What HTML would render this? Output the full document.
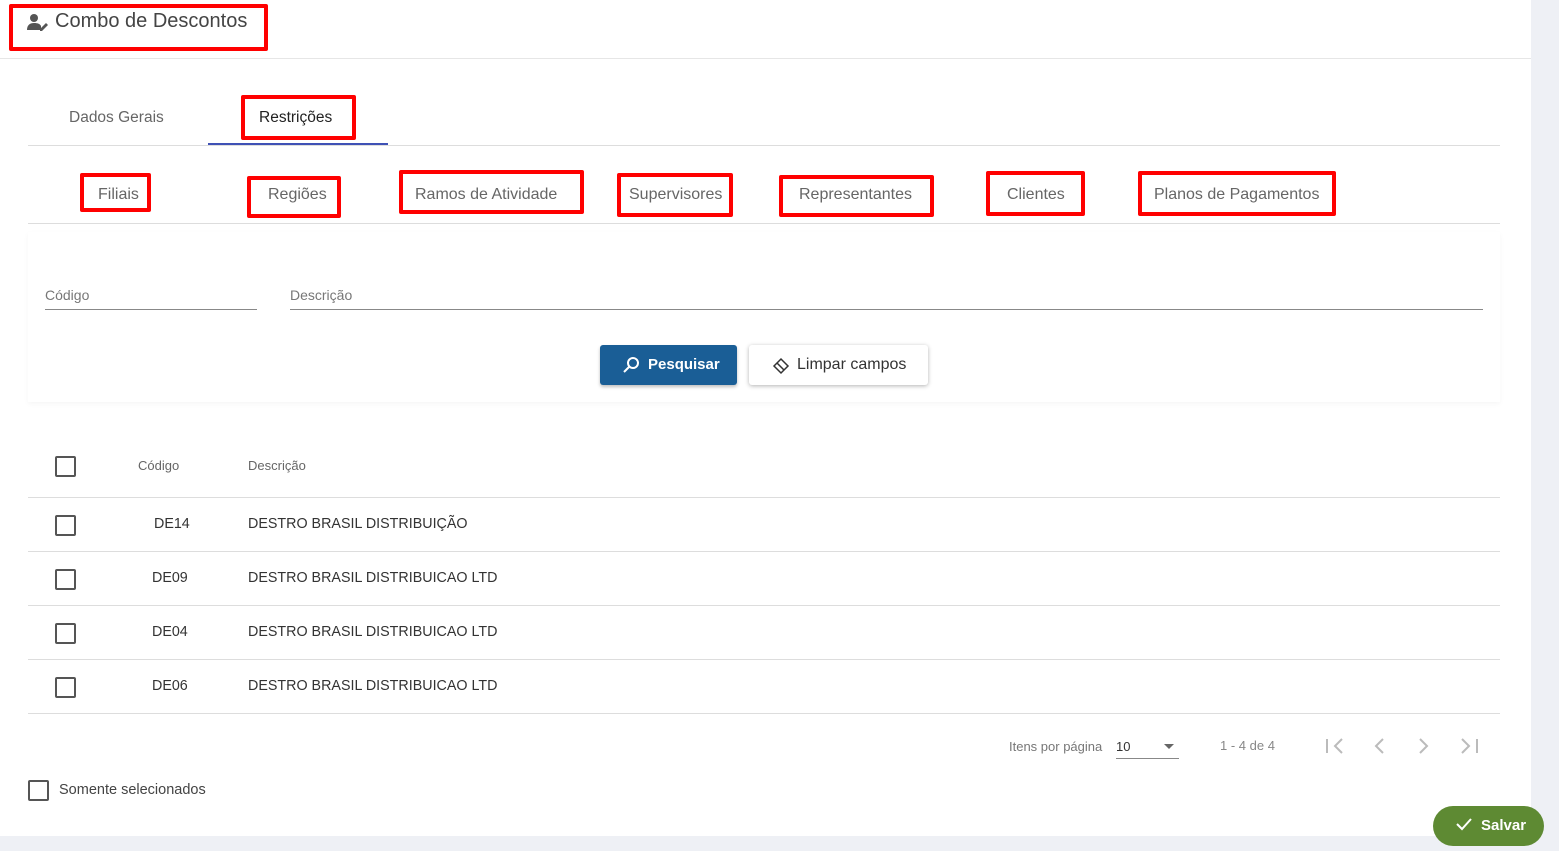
<!DOCTYPE html><html><head><meta charset="utf-8"><style>
*{box-sizing:border-box;margin:0;padding:0}
body{width:1559px;height:851px;background:#eef0f5;font-family:"Liberation Sans",sans-serif;position:relative;overflow:hidden;color:#333}
.a{position:absolute}
.red{position:absolute;border:4px solid #f00;border-radius:2px}
.t{position:absolute;font-size:15px;color:#666;white-space:nowrap}
.tab{font-size:16px;top:186px}
.r{font-size:14.3px;color:#333}
.cb{position:absolute;width:21px;height:21px;border:2px solid #555;border-radius:2px;left:55px}
.row{position:absolute;left:28px;width:1472px;height:1px;background:#ddd}
</style></head><body>
<div class="a" style="left:0;top:0;width:1531px;height:836px;background:#fff"></div>
<div class="a" style="left:0;top:58px;width:1531px;height:1px;background:#e6e6e6"></div>
<svg class="a" style="left:27px;top:13px" width="22" height="18" viewBox="0 0 22 18"><circle cx="7" cy="5" r="4" fill="#555"/><path d="M0 17c0-5 3-7 7-7s6 1 7 3v4z" fill="#555"/><path d="M13 16l6-6 2 2-6 6h-2z" fill="#555"/></svg>
<div class="t" style="left:55px;top:10px;font-size:20px;color:#444">Combo de Descontos</div>
<div class="red" style="left:9px;top:4px;width:259px;height:47px"></div>
<div class="t" style="left:69px;top:109px;color:#666;font-size:15.5px">Dados Gerais</div>
<div class="t" style="left:259px;top:109px;color:#222;font-size:15.5px">Restrições</div>
<div class="red" style="left:241px;top:95px;width:115px;height:45px"></div>
<div class="a" style="left:28px;top:145px;width:1472px;height:1px;background:#ddd"></div>
<div class="a" style="left:208px;top:143px;width:180px;height:2px;background:#3f51b5"></div>
<div class="t tab" style="left:98px">Filiais</div>
<div class="t tab" style="left:268px">Regiões</div>
<div class="t tab" style="left:415px">Ramos de Atividade</div>
<div class="t tab" style="left:629px">Supervisores</div>
<div class="t tab" style="left:799px">Representantes</div>
<div class="t tab" style="left:1007px">Clientes</div>
<div class="t tab" style="left:1154px">Planos de Pagamentos</div>
<div class="red" style="left:80px;top:173px;width:71px;height:39px"></div>
<div class="red" style="left:247px;top:176px;width:94px;height:42px"></div>
<div class="red" style="left:399px;top:170px;width:185px;height:44px"></div>
<div class="red" style="left:617px;top:173px;width:116px;height:44px"></div>
<div class="red" style="left:779px;top:175px;width:155px;height:42px"></div>
<div class="red" style="left:986px;top:171px;width:99px;height:45px"></div>
<div class="red" style="left:1138px;top:171px;width:198px;height:45px"></div>
<div class="a" style="left:28px;top:223px;width:1472px;height:1px;background:#ddd"></div>
<div class="a" style="left:28px;top:232px;width:1472px;height:170px;box-shadow:0 2px 5px rgba(0,0,0,.04)"></div>
<div class="t" style="left:45px;top:287px;font-size:14px;color:#777">Código</div>
<div class="a" style="left:45px;top:309px;width:212px;height:1px;background:#888"></div>
<div class="t" style="left:290px;top:287px;font-size:14px;color:#777">Descrição</div>
<div class="a" style="left:290px;top:309px;width:1193px;height:1px;background:#888"></div>
<div class="a" style="left:600px;top:345px;width:137px;height:40px;background:#1a5e96;border-radius:3px;box-shadow:0 2px 3px rgba(0,0,0,.25)"></div>
<svg class="a" style="left:623px;top:356px" width="18" height="18" viewBox="0 0 18 18"><circle cx="10" cy="7" r="5" fill="none" stroke="#fff" stroke-width="2"/><path d="M6 11l-5 5" stroke="#fff" stroke-width="2"/></svg>
<div class="t" style="left:648px;top:356px;color:#fff;font-weight:bold">Pesquisar</div>
<div class="a" style="left:749px;top:345px;width:179px;height:40px;background:#fff;border-radius:3px;box-shadow:0 1px 4px rgba(0,0,0,.3)"></div>
<svg class="a" style="left:772px;top:357px" width="18" height="18" viewBox="0 0 18 18"><path d="M2 9l7-7 7 7-7 7z M5 6l7 7" fill="none" stroke="#333" stroke-width="1.5"/></svg>
<div class="t" style="left:797px;top:356px;color:#333;font-size:16px">Limpar campos</div>
<div class="cb" style="top:456px"></div>
<div class="t" style="left:138px;top:458px;font-size:13px;color:#666">Código</div>
<div class="t" style="left:248px;top:458px;font-size:13px;color:#666">Descrição</div>
<div class="row" style="top:497px"></div>
<div class="cb" style="top:515px"></div><div class="t r" style="left:154px;top:516px">DE14</div><div class="t r" style="left:248px;top:516px">DESTRO BRASIL DISTRIBUIÇÃO</div>
<div class="row" style="top:551px"></div>
<div class="cb" style="top:569px"></div><div class="t r" style="left:152px;top:570px">DE09</div><div class="t r" style="left:248px;top:570px">DESTRO BRASIL DISTRIBUICAO LTD</div>
<div class="row" style="top:605px"></div>
<div class="cb" style="top:623px"></div><div class="t r" style="left:152px;top:624px">DE04</div><div class="t r" style="left:248px;top:624px">DESTRO BRASIL DISTRIBUICAO LTD</div>
<div class="row" style="top:659px"></div>
<div class="cb" style="top:677px"></div><div class="t r" style="left:152px;top:678px">DE06</div><div class="t r" style="left:248px;top:678px">DESTRO BRASIL DISTRIBUICAO LTD</div>
<div class="row" style="top:713px"></div>
<div class="t" style="left:1009px;top:739px;font-size:13px;color:#777">Itens por página</div>
<div class="t" style="left:1116px;top:739px;font-size:13px;color:#333">10</div>
<div class="a" style="left:1164px;top:744px;border-left:5px solid transparent;border-right:5px solid transparent;border-top:5px solid #666"></div>
<div class="a" style="left:1116px;top:758px;width:63px;height:1px;background:#888"></div>
<div class="t" style="left:1220px;top:738px;font-size:13px;color:#888">1 - 4 de 4</div>
<svg class="a" style="left:1320px;top:736px" width="165" height="20" viewBox="0 0 165 20"><g fill="none" stroke="#bbb" stroke-width="2"><path d="M7 3v14M22 3l-7 7 7 7"/><path d="M63 3l-7 7 7 7"/><path d="M100 3l7 7-7 7"/><path d="M142 3l7 7-7 7M157 3v14"/></g></svg>
<div class="a" style="left:28px;top:780px;width:21px;height:21px;border:2px solid #555;border-radius:2px"></div>
<div class="t" style="left:59px;top:782px;font-size:14.5px;color:#444">Somente selecionados</div>
<div class="a" style="left:1433px;top:806px;width:111px;height:40px;background:#5e8a33;border-radius:20px"></div>
<svg class="a" style="left:1455px;top:817px" width="18" height="14" viewBox="0 0 18 14"><path d="M2 7l5 5L16 2" fill="none" stroke="#fff" stroke-width="2"/></svg>
<div class="t" style="left:1481px;top:817px;color:#fff;font-weight:bold">Salvar</div>
</body></html>
